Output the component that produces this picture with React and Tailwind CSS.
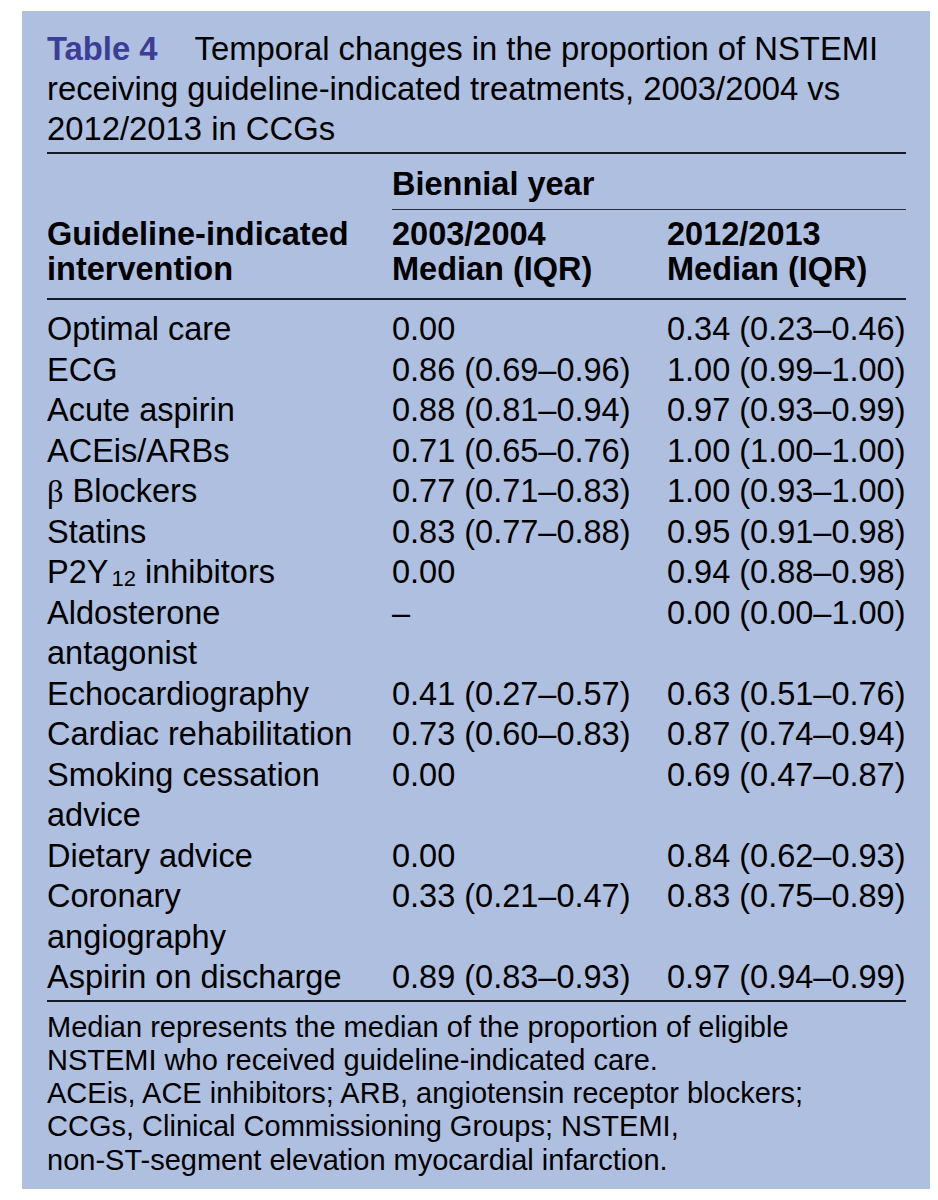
import React from 'react';

const rows = [
  { name: 'Optimal care', a: '0.00', b: '0.34 (0.23–0.46)' },
  { name: 'ECG', a: '0.86 (0.69–0.96)', b: '1.00 (0.99–1.00)' },
  { name: 'Acute aspirin', a: '0.88 (0.81–0.94)', b: '0.97 (0.93–0.99)' },
  { name: 'ACEis/ARBs', a: '0.71 (0.65–0.76)', b: '1.00 (1.00–1.00)' },
  {
    name: (
      <>
        <span className="font-['Liberation_Serif',serif]">β</span> Blockers
      </>
    ),
    a: '0.77 (0.71–0.83)',
    b: '1.00 (0.93–1.00)',
  },
  { name: 'Statins', a: '0.83 (0.77–0.88)', b: '0.95 (0.91–0.98)' },
  {
    name: (
      <>
        P2Y<sub className="text-[22px] ml-[3px] relative top-[3px] align-baseline">12</sub> inhibitors
      </>
    ),
    a: '0.00',
    b: '0.94 (0.88–0.98)',
  },
  { name: 'Aldosterone antagonist', a: '–', b: '0.00 (0.00–1.00)' },
  { name: 'Echocardiography', a: '0.41 (0.27–0.57)', b: '0.63 (0.51–0.76)' },
  { name: 'Cardiac rehabilitation', a: '0.73 (0.60–0.83)', b: '0.87 (0.74–0.94)' },
  { name: 'Smoking cessation advice', a: '0.00', b: '0.69 (0.47–0.87)' },
  { name: 'Dietary advice', a: '0.00', b: '0.84 (0.62–0.93)' },
  { name: 'Coronary angiography', a: '0.33 (0.21–0.47)', b: '0.83 (0.75–0.89)' },
  { name: 'Aspirin on discharge', a: '0.89 (0.83–0.93)', b: '0.97 (0.94–0.99)' },
];

export default function App() {
  return (
    <div className="min-h-[1200px] bg-white pt-[11px] pl-[22px] font-['Liberation_Sans',Arial,sans-serif] text-black">
      <div className="w-[908px] bg-[#aebfe0] pl-[25px] pr-[24px] pt-[18px] pb-[12px]">
        {/* caption */}
        <div className="flex flex-wrap text-[32.8px] leading-[40px]">
          <p>
            <span className="font-bold text-[#3b3d97] mr-[37px]">Table 4</span>
            Temporal changes in the proportion of NSTEMI receiving guideline-indicated treatments, 2003/2004 vs 2012/2013 in CCGs
          </p>
        </div>
        <div className="h-[2px] mt-[3px] bg-[#161a26]" />

        {/* header */}
        <div className="grid grid-cols-[345px_275px_1fr] text-[32.5px] font-bold">
          <div />
          <div className="col-span-2 pt-[12px]">
            <div className="leading-[36px]">Biennial year</div>
            <div className="h-px bg-[#2a2f40] mt-[7px]" />
          </div>
          <div className="pt-[7px] pb-[11px] leading-[35px] pr-[20px]">Guideline-indicated intervention</div>
          <div className="pt-[7px] pb-[11px] leading-[35px]">
            2003/2004
            <br />
            Median (IQR)
          </div>
          <div className="pt-[7px] pb-[11px] leading-[35px]">
            2012/2013
            <br />
            Median (IQR)
          </div>
        </div>
        <div className="h-[2px] bg-[#161a26]" />

        {/* body */}
        <div className="grid grid-cols-[345px_275px_1fr] text-[32.5px] leading-[40.5px] pt-[9px] pb-[2px]">
          {rows.map((r, i) => (
            <React.Fragment key={i}>
              <div className="pr-[30px]">{r.name}</div>
              <div className="whitespace-nowrap">{r.a}</div>
              <div className="whitespace-nowrap">{r.b}</div>
            </React.Fragment>
          ))}
        </div>
        <div className="h-[2px] bg-[#161a26]" />

        {/* footnote */}
        <div className="text-[29px] leading-[33.3px] pt-[9px] pr-[80px]">
          <p>Median represents the median of the proportion of eligible NSTEMI who received guideline-indicated care.</p>
          <p>
            ACEis, ACE inhibitors; ARB, angiotensin receptor blockers;
            <br />
            CCGs, Clinical Commissioning Groups; NSTEMI,
            <br />
            non-ST-segment elevation myocardial infarction.
          </p>
        </div>
      </div>
    </div>
  );
}
